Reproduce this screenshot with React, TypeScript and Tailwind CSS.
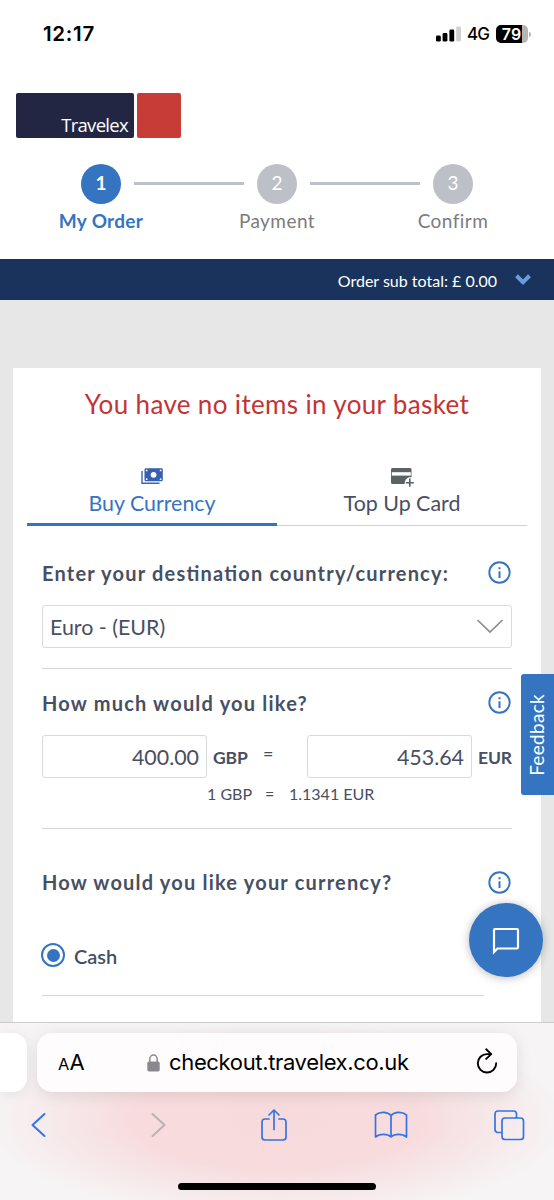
import type { ReactNode } from "react";
import clsx from "clsx";

const STEPS = [
  { number: 1, label: "My Order", active: true },
  { number: 2, label: "Payment", active: false },
  { number: 3, label: "Confirm", active: false },
];

function StatusBar() {
  return (
    <div className="flex h-[68px] items-center justify-between pl-[43px] pr-[23px] font-['Inter',sans-serif] text-black">
      <span className="text-[20.5px] font-semibold leading-6 tracking-[0.7px]">12:17</span>
      <div className="flex items-center">
        <svg width="25" height="16" viewBox="0 0 25 16" aria-hidden>
          <rect x="0" y="9.6" width="4.8" height="6" rx="1.4" fill="#000" />
          <rect x="6.6" y="7" width="4.8" height="8.6" rx="1.4" fill="#000" />
          <rect x="13.4" y="3.6" width="4.8" height="12" rx="1.4" fill="#000" />
          <rect x="20.2" y="0.4" width="4.8" height="15.2" rx="1.4" fill="#d1d1d1" />
        </svg>
        <span className="ml-[6px] w-[22px] text-[17px] font-medium leading-5 tracking-[-0.9px]">4G</span>
        <div className="ml-[7px] flex h-[18px] w-[32px] items-center justify-center rounded-[5px] bg-gradient-to-r from-black from-80% to-[#b5b5b5] to-80% pr-px text-[16px] font-semibold leading-[18px] text-white">
          79
        </div>
        <div className="ml-px h-[5px] w-[2px] rounded-r-full bg-[#b5b5b5]" />
      </div>
    </div>
  );
}

function Logo() {
  return (
    <div className="ml-4 mt-[25px] flex h-[45px] gap-[3px]">
      <div className="flex w-[118px] items-end justify-end rounded-[2px] bg-[#232643] pb-[2px] pr-[6px] font-['Open_Sans',sans-serif] text-[18.5px] font-medium leading-[22px] tracking-[-0.7px] text-white">
        Travelex
      </div>
      <div className="w-[44px] rounded-[2px] bg-[#c83c38]" />
    </div>
  );
}

function Stepper() {
  return (
    <div className="mt-[25.5px]">
      <div className="flex items-center pl-[81px]">
        {STEPS.map((step, i) => (
          <div key={step.number} className="flex items-center">
            {i > 0 && <div className="mx-[13px] h-[3px] w-[110px] bg-[#bdc0c6]" />}
            <div
              className={clsx(
                "flex h-10 w-10 items-center justify-center rounded-full text-[19px] text-white",
                step.active ? "bg-[#3574c0] font-bold" : "bg-[#bdc0c6]"
              )}
            >
              {step.number}
            </div>
          </div>
        ))}
      </div>
      <div className="mx-[13px] mt-[5px] grid grid-cols-3 text-center text-[19px] leading-6">
        {STEPS.map((step) => (
          <span
            key={step.number}
            className={clsx(
              step.active ? "font-bold tracking-[0.3px] text-[#3574c0]" : "tracking-[0.45px] text-[#7c7c7c]"
            )}
          >
            {step.label}
          </span>
        ))}
      </div>
    </div>
  );
}

function SubTotalBar() {
  return (
    <div className="flex h-[41px] items-center justify-end bg-[#19335c] pr-[23px] text-[16px] text-white">
      <span className="pt-[3px]">Order sub total: £ 0.00</span>
      <svg className="ml-[18px]" width="16" height="11" viewBox="0 0 16 11" aria-hidden>
        <path d="M1.5 1.8 8 8.2l6.5-6.4" fill="none" stroke="#6b9bdb" strokeWidth="4" />
      </svg>
    </div>
  );
}

function CashIcon() {
  return (
    <svg width="22" height="17" viewBox="0 0 22 17" aria-hidden>
      <path d="M1 3v12.3h17.5" fill="none" stroke="#3a66b4" strokeWidth="1.4" />
      <rect x="3.5" y="0.3" width="18.3" height="13" rx="1.4" fill="#3560b0" />
      <circle cx="12.6" cy="6.8" r="2.9" fill="#fff" />
      <g fill="#fff">
        <circle cx="5.7" cy="2.4" r="0.9" />
        <circle cx="19.6" cy="2.4" r="0.9" />
        <circle cx="5.7" cy="11.2" r="0.9" />
        <circle cx="19.6" cy="11.2" r="0.9" />
      </g>
    </svg>
  );
}

function CardPlusIcon() {
  return (
    <svg width="23" height="19" viewBox="0 0 23 19" aria-hidden>
      <path d="M1.5 0H19q1.5 0 1.5 1.5v7.7H18Q14 10.5 13.5 16h-12Q0 16 0 14.5v-13Q0 0 1.5 0Z" fill="#5a6263" />
      <path d="M0.8 4.2h19v3.4h-19z" fill="#fff" />
      <path d="M18.8 10.6v8.2M14.8 14.7h8" stroke="#5a6263" strokeWidth="1.6" />
    </svg>
  );
}

function Tabs() {
  return (
    <div className="mx-[14px] mt-12 flex h-[58px] text-[21.4px] leading-7">
      <div className="flex w-1/2 flex-col items-center border-b-[3px] border-[#3574c0] text-[#3574c0]">
        <div className="flex h-[21px] items-start">
          <CashIcon />
        </div>
        Buy Currency
      </div>
      <div className="flex w-1/2 flex-col items-center border-b border-[#ccd2d8] text-[#474f63]">
        <div className="flex h-[21px] items-start">
          <CardPlusIcon />
        </div>
        Top Up Card
      </div>
    </div>
  );
}

function InfoIcon() {
  return (
    <svg className="mr-px shrink-0" width="23" height="23" viewBox="0 0 23 23" aria-hidden>
      <circle cx="11.5" cy="11.5" r="10.2" fill="none" stroke="#3574c0" strokeWidth="1.9" />
      <path d="M11.5 10.2V17M11.5 6.3v2" stroke="#3574c0" strokeWidth="2" />
    </svg>
  );
}

function Question({ children }: { children: ReactNode }) {
  return (
    <div className="flex h-6 items-center justify-between">
      <h2 className="whitespace-nowrap text-[20px] font-bold leading-6 tracking-[1.2px] text-[#474f63] [font-feature-settings:'liga'_1]">
        {children}
      </h2>
      <InfoIcon />
    </div>
  );
}

function AmountInput({ value }: { value: string }) {
  return (
    <div className="flex h-[43px] w-[165px] shrink-0 items-center justify-end rounded-[3px] border-[1.5px] border-[#dadada] pr-[7px] pt-[2px] text-[21.4px]">
      {value}
    </div>
  );
}

function OrderForm() {
  return (
    <div className="px-[29px] pt-[34.5px] text-[#474f63]">
      <Question>Enter your destination country/currency:</Question>
      <div className="mt-[20.5px] flex h-[43px] items-center justify-between rounded-[3px] border-[1.5px] border-[#dadada] px-[7px] text-[21.4px]">
        <span className="pt-[2px]">Euro - (EUR)</span>
        <svg width="28" height="15" viewBox="0 0 28 15" aria-hidden>
          <path d="m1.5 1 12.5 12L26.5 1" fill="none" stroke="#8c8c8c" strokeWidth="1.7" />
        </svg>
      </div>
      <div className="mt-5 h-px bg-[#d5d5d5]" />

      <div className="mt-[21.5px]">
        <Question>How much would you like?</Question>
      </div>
      <div className="mt-[20.5px] flex items-center">
        <AmountInput value="400.00" />
        <span className="ml-[6px] mt-1 w-[50px] text-[17.5px] font-bold tracking-[-0.1px]">GBP</span>
        <span className="-mt-[6px] w-[44px] text-[18px]">=</span>
        <AmountInput value="453.64" />
        <span className="ml-[6px] mt-1 text-[17.5px] font-bold tracking-[-0.1px]">EUR</span>
      </div>
      <div className="mt-1 flex h-6 items-center pl-[165px] text-[16px]">
        <span className="w-[58px]">1 GBP</span>
        <span className="w-[24px]">=</span>
        <span>1.1341 EUR</span>
      </div>
      <div className="mt-[22px] h-px bg-[#d5d5d5]" />

      <div className="mt-[41px]">
        <Question>How would you like your currency?</Question>
      </div>
      <div className="mt-[49px] flex h-6 items-center">
        <span className="-ml-px flex h-6 w-6 items-center justify-center rounded-full border-2 border-[#3574c0]">
          <span className="h-[13px] w-[13px] rounded-full bg-[#3574c0]" />
        </span>
        <span className="ml-[9px] mt-[2px] text-[20px] font-semibold">Cash</span>
      </div>
      <div className="mr-7 mt-[28px] h-px bg-[#d5d5d5]" />
    </div>
  );
}

function BrowserBar() {
  return (
    <div className="absolute inset-x-0 bottom-0 h-[178px] overflow-hidden border-t border-[#cbcbcd] bg-[#f6f4f5] bg-[radial-gradient(ellipse_290px_98px_at_50%_98px,#f7dadc_0%,#f7dcde_50%,transparent_100%)] font-['Inter',sans-serif]">
      <div className="mt-[10px] flex gap-[10px]">
        <div className="h-[59px] w-[27px] rounded-r-[14px] bg-white shadow-[0_2px_14px_rgba(0,0,0,0.08)]" />
        <div className="flex h-[59px] w-[480px] items-center rounded-[15px] bg-[#fefcfd] pl-[21px] pr-[19px] text-black shadow-[0_3px_16px_rgba(0,0,0,0.1)]">
          <div className="flex w-[89px] items-baseline">
            <span className="text-[16.5px]">A</span>
            <span className="text-[22px]">A</span>
          </div>
          <svg width="13" height="18" viewBox="0 0 13 18" aria-hidden>
            <path d="M2.8 8V4.8a3.7 3.7 0 0 1 7.4 0V8" fill="none" stroke="#89898d" strokeWidth="1.5" />
            <rect x="0.3" y="7.5" width="12.4" height="10" rx="1.7" fill="#89898d" />
          </svg>
          <span className="ml-[9px] text-[22px] tracking-[-0.35px]">checkout.travelex.co.uk</span>
          <svg className="mb-[3px] ml-auto" width="22" height="26" viewBox="0 0 22 26" fill="none" stroke="#000" strokeWidth="1.9" aria-hidden>
            <path d="M14.6 6.1H11a9.2 9.2 0 1 0 9.2 9.2" strokeLinecap="round" />
            <path d="m10.2 1.3 5 4.800-5 4.800" strokeLinecap="round" strokeLinejoin="round" />
          </svg>
        </div>
      </div>

      <div className="mt-[15px] flex h-[36px] items-center pl-[31px] text-[#3574e4]">
        <svg width="15" height="26" viewBox="0 0 15 26" fill="none" stroke="currentColor" strokeWidth="2" aria-hidden>
          <path d="M13.5 2 1.5 13l12 11" strokeLinecap="round" strokeLinejoin="round" />
        </svg>
        <svg className="ml-[105px] text-[#bcb0b3]" width="15" height="26" viewBox="0 0 15 26" fill="none" stroke="currentColor" strokeWidth="2" aria-hidden>
          <path d="m1.5 2 12 11-12 11" strokeLinecap="round" strokeLinejoin="round" />
        </svg>
        <svg className="ml-[94px]" width="28" height="34" viewBox="0 0 28 34" fill="none" stroke="currentColor" strokeWidth="1.7" aria-hidden>
          <path d="M9 11H5q-3 0-3 3v15q0 3 3 3h18q3 0 3-3V14q0-3-3-3h-4" strokeLinecap="round" />
          <path d="M14 21.5V2M9 7l5-5 5 5" strokeLinecap="round" strokeLinejoin="round" />
        </svg>
        <svg className="ml-[86px]" width="34" height="28" viewBox="0 0 34 28" fill="none" stroke="currentColor" strokeWidth="1.7" strokeLinejoin="round" aria-hidden>
          <path d="M17 4.5C13.5 .5 5.5 .5 1.5 4v22c4-3.500 12-3.500 15.500 0 3.500-3.500 11.500-3.500 15.500 0V4C28.500 .5 20.500 .5 17 4.500V26" />
        </svg>
        <svg className="ml-[85px]" width="32" height="32" viewBox="0 0 32 32" fill="none" stroke="currentColor" strokeWidth="1.7" aria-hidden>
          <path d="M9 23.500H5q-3 0-3-3V5q0-3 3-3h15.500q3 0 3 3v4" />
          <rect x="9" y="9" width="21.500" height="21.500" rx="3" />
        </svg>
      </div>
      <div className="mx-auto mt-[39.5px] h-[7px] w-[198px] rounded-full bg-black" />
    </div>
  );
}

export default function App() {
  return (
    <div className="relative h-[1200px] w-[554px] overflow-hidden bg-[#e7e7e7] font-['Lato',sans-serif]">
      <header className="h-[259px] bg-white">
        <StatusBar />
        <Logo />
        <Stepper />
      </header>
      <SubTotalBar />

      <main className="ml-[13px] mt-[68px] h-[660px] w-[528px] bg-white pt-5">
        <h1 className="text-center text-[26px] leading-8 tracking-[0.35px] text-[#c23435]">
          You have no items in your basket
        </h1>
        <Tabs />
        <OrderForm />
      </main>

      {/* floating widgets */}
      <button
        type="button"
        className="absolute right-0 top-[674px] flex h-[121px] w-[33px] items-center justify-center rounded-l-[3px] bg-[#3574c0]"
      >
        <span className="rotate-180 text-[19px] tracking-[0.3px] text-white [writing-mode:vertical-rl]">Feedback</span>
      </button>
      <button
        type="button"
        aria-label="Chat"
        className="absolute left-[469px] top-[903px] flex h-[74px] w-[74px] items-center justify-center rounded-full bg-[#3574c0] pt-px shadow-[0_1px_10px_rgba(0,0,0,0.28)]"
      >
        <svg width="28" height="28" viewBox="0 0 28 28" fill="none" aria-hidden>
          <path d="M2 25V3q0-1 1-1h22q1 0 1 1v17.500q0 1-1 1H5.500Z" stroke="#fff" strokeWidth="2.2" />
        </svg>
      </button>

      <BrowserBar />
    </div>
  );
}
